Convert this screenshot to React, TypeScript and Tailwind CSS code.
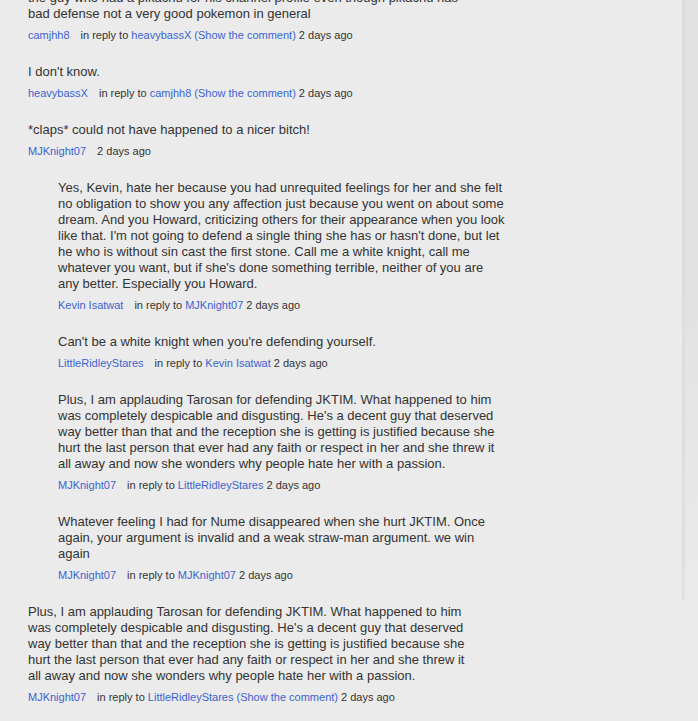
import React from 'react';

interface Comment {
  lines: string[];
  author: string;
  replyTo?: string;
  showLink?: boolean;
  nested?: boolean;
}

const plusLines = [
  'Plus, I am applauding Tarosan for defending JKTIM. What happened to him',
  "was completely despicable and disgusting. He's a decent guy that deserved",
  'way better than that and the reception she is getting is justified because she',
  'hurt the last person that ever had any faith or respect in her and she threw it',
  'all away and now she wonders why people hate her with a passion.',
];

const comments: Comment[] = [
  {
    lines: [
      'the guy who had a pikachu for his channel profile even though pikachu has',
      'bad defense not a very good pokemon in general',
    ],
    author: 'camjhh8',
    replyTo: 'heavybassX',
    showLink: true,
  },
  { lines: ["I don't know."], author: 'heavybassX', replyTo: 'camjhh8', showLink: true },
  { lines: ['*claps* could not have happened to a nicer bitch!'], author: 'MJKnight07' },
  {
    lines: [
      'Yes, Kevin, hate her because you had unrequited feelings for her and she felt',
      'no obligation to show you any affection just because you went on about some',
      'dream. And you Howard, criticizing others for their appearance when you look',
      "like that. I'm not going to defend a single thing she has or hasn't done, but let",
      'he who is without sin cast the first stone. Call me a white knight, call me',
      "whatever you want, but if she's done something terrible, neither of you are",
      'any better. Especially you Howard.',
    ],
    author: 'Kevin Isatwat',
    replyTo: 'MJKnight07',
    nested: true,
  },
  {
    lines: ["Can't be a white knight when you're defending yourself."],
    author: 'LittleRidleyStares',
    replyTo: 'Kevin Isatwat',
    nested: true,
  },
  { lines: plusLines, author: 'MJKnight07', replyTo: 'LittleRidleyStares', nested: true },
  {
    lines: [
      'Whatever feeling I had for Nume disappeared when she hurt JKTIM. Once',
      'again, your argument is invalid and a weak straw-man argument. we win',
      'again',
    ],
    author: 'MJKnight07',
    replyTo: 'MJKnight07',
    nested: true,
  },
  { lines: plusLines, author: 'MJKnight07', replyTo: 'LittleRidleyStares', showLink: true },
];

function CommentItem({ c }: { c: Comment }) {
  return (
    <div className={c.nested ? 'pl-[30px]' : ''}>
      <p className="text-[13px] leading-[16px] text-[#333333] whitespace-nowrap">
        {c.lines.map((line, i) => (
          <React.Fragment key={i}>
            {i > 0 && <br />}
            {line}
          </React.Fragment>
        ))}
      </p>
      <div className="mt-[5px] text-[11px] leading-[16px] text-[#333333]">
        <a className="text-[#3b63cf] mr-[11px]">{c.author}</a>
        {c.replyTo ? (
          <>
            <span>in reply to </span>
            <a className="text-[#3b63cf]">
              {c.replyTo}
              {c.showLink ? ' (Show the comment)' : ''}
            </a>
            <span> 2 days ago</span>
          </>
        ) : (
          <span>2 days ago</span>
        )}
      </div>
    </div>
  );
}

export default function App() {
  return (
    <div
      className="relative w-[698px] h-[721px] overflow-hidden bg-[#ebebeb]"
      style={{ fontFamily: '"Liberation Sans", Arial, Helvetica, sans-serif' }}
    >
      {/* right side column shadow */}
      <div className="absolute top-0 right-0 w-[16px] h-[600px] bg-gradient-to-b from-[#e2e2e2] via-[#e2e2e2] to-[#ebebeb]">
        <div className="h-full w-[4px] bg-gradient-to-r from-[#dadada] to-transparent" />
      </div>

      <div className="relative pl-[28px] mt-[-10px] flex flex-col gap-[21px]">
        {comments.map((c, i) => (
          <CommentItem key={i} c={c} />
        ))}
      </div>
    </div>
  );
}
